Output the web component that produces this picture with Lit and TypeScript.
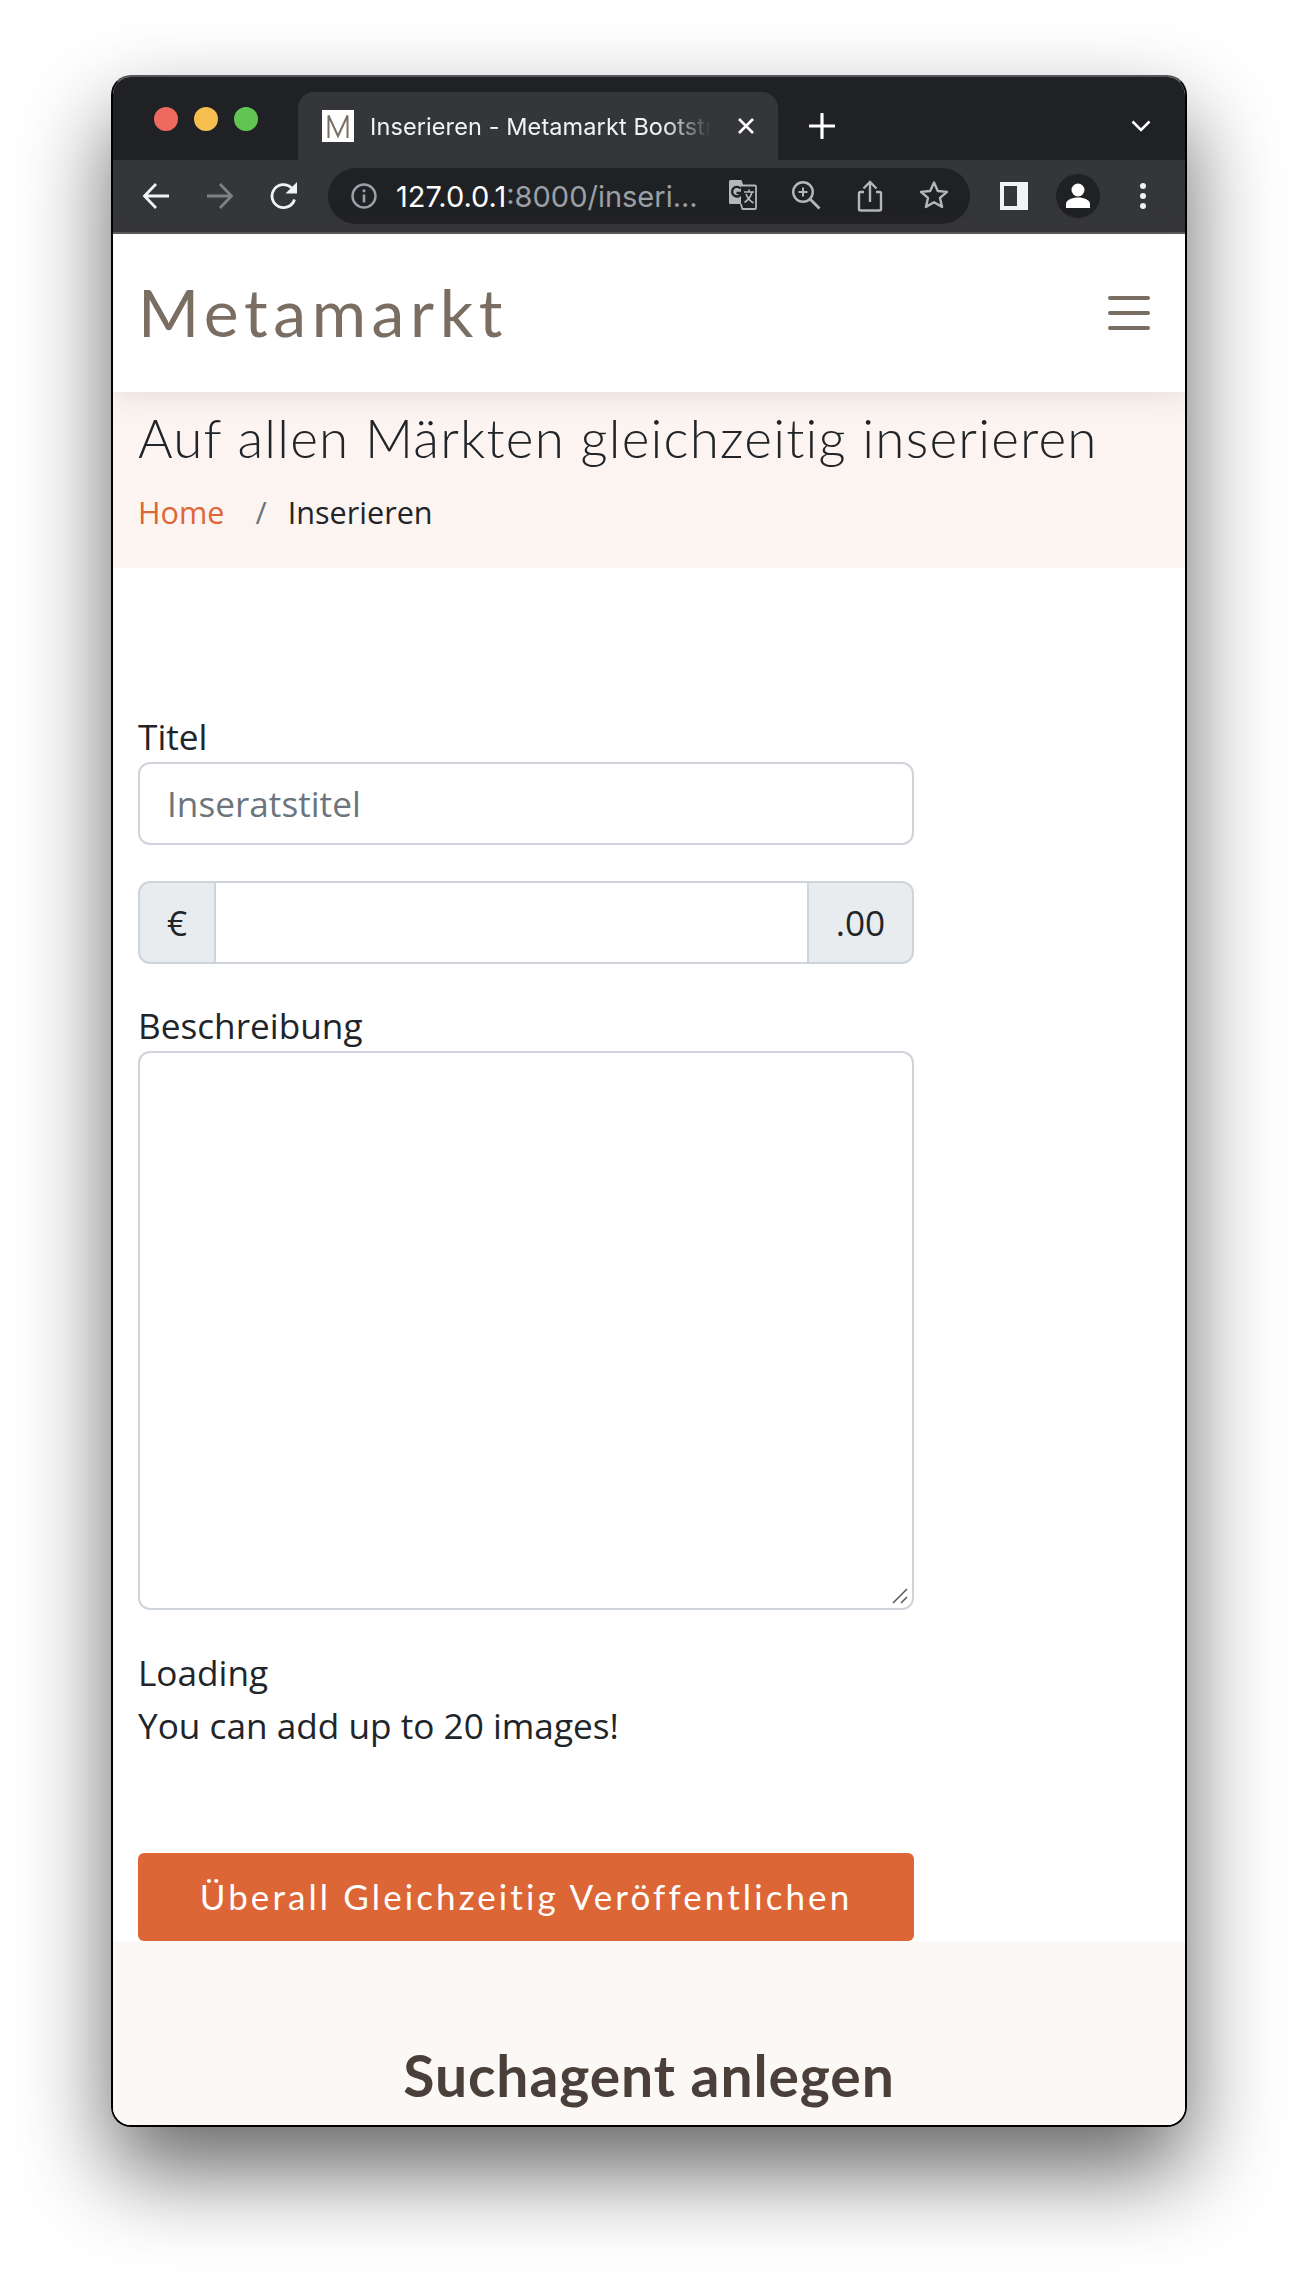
import { LitElement, css, html } from "lit";
import { customElement } from "lit/decorators.js";

// top bar of the browser window, everything in it is 2x because the shot is retina
@customElement("browser-chrome")
class BrowserChrome extends LitElement {
  static styles = css`
    :host {
      display: block;
      background: #202124;
      color: #fff;
      font-family: Inter, Roboto, sans-serif;
    }
    svg {
      display: block;
      flex: none;
    }
    .tabstrip {
      height: 83px;
      padding-top: 15px;
      box-sizing: border-box;
      display: flex;
      align-items: stretch;
    }
    .lights {
      width: 185px;
      flex: none;
      box-sizing: border-box;
      padding: 15px 0 0 41px;
      display: flex;
      gap: 16px;
    }
    .lights span {
      width: 24px;
      height: 24px;
      border-radius: 50%;
    }
    .red { background: #ee6a5f; }
    .yellow { background: #f5be4f; }
    .green { background: #61c554; }
    .tab {
      width: 480px;
      flex: none;
      background: #35363a;
      border-radius: 16px 16px 0 0;
      box-sizing: border-box;
      padding: 0 0 0 24px;
      display: flex;
      align-items: center;
      position: relative;
    }
    .favicon {
      width: 32px;
      height: 32px;
      background: #fff;
      margin-right: 16px;
    }
    .tab-title {
      width: 359px;
      overflow: hidden;
      white-space: nowrap;
      font-size: 23.5px;
      letter-spacing: 0.1px;
      color: #f1f3f4;
      -webkit-mask-image: linear-gradient(90deg, #000 82%, transparent 95%);
      mask-image: linear-gradient(90deg, #000 82%, transparent 95%);
    }
    .tab-close {
      margin-left: 8px;
    }
    .new-tab {
      margin-left: 31px;
      align-self: center;
    }
    .tab-menu {
      margin-left: auto;
      margin-right: 34px;
      align-self: center;
    }
    .toolbar {
      height: 72px;
      background: #35363a;
      border-bottom: 2px solid #5a5b5e;
      display: flex;
      align-items: center;
      padding-left: 29px;
      box-sizing: content-box;
    }
    .nav {
      display: flex;
      gap: 36px;
      margin-right: 30px;
    }
    .omnibox {
      width: 642px;
      height: 56px;
      background: #202124;
      border-radius: 28px;
      display: flex;
      align-items: center;
      box-sizing: border-box;
      padding-left: 22px;
      flex: none;
    }
    .url {
      margin-left: 18px;
      width: 331px;
      flex: none;
      font-size: 29px;
      white-space: nowrap;
      color: #fff;
    }
    .url span {
      color: #9aa0a6;
    }
    .omni-icons {
      display: flex;
      gap: 34px;
    }
    .side {
      margin-left: 30px;
    }
    .avatar {
      width: 44px;
      height: 44px;
      border-radius: 50%;
      background: #202124;
      margin-left: 28px;
      display: flex;
      align-items: center;
      justify-content: center;
    }
    .dots {
      margin-left: 39px;
    }
  `;

  render() {
    return html`
      <div class="tabstrip">
        <div class="lights">
          <span class="red"></span><span class="yellow"></span><span class="green"></span>
        </div>
        <div class="tab">
          <svg class="favicon" viewBox="0 0 32 32">
            <path d="M6.5 28V5.5L16 26 25.5 5.5V28" fill="none" stroke="#7a6d62" stroke-width="2" />
          </svg>
          <div class="tab-title">Inserieren - Metamarkt Bootstrap</div>
          <svg class="tab-close" width="18" height="18" viewBox="0 0 18 18">
            <path d="M2 2l14 14M16 2L2 16" stroke="#fff" stroke-width="2.6" />
          </svg>
        </div>
        <svg class="new-tab" width="26" height="26" viewBox="0 0 26 26">
          <path d="M13 1v24M1 13h24" stroke="#fff" stroke-width="3.2" stroke-linecap="round" />
        </svg>
        <svg class="tab-menu" width="20" height="12" viewBox="0 0 20 12">
          <path d="M1.5 1.5L10 10l8.500-8.500" fill="none" stroke="#fff" stroke-width="2.500" />
        </svg>
      </div>
      <div class="toolbar">
        <div class="nav">
          <svg width="28" height="28" viewBox="0 0 28 28">
            <path d="M27 14H3M14 2L2.500 14 14 26" fill="none" stroke="#f1f3f4" stroke-width="2.800" />
          </svg>
          <svg width="28" height="28" viewBox="0 0 28 28">
            <path d="M1 14h24M14 2l11.500 12L14 26" fill="none" stroke="#7e8083" stroke-width="2.800" />
          </svg>
          <svg width="28" height="28" viewBox="0 0 28 28">
            <path d="M24.500 17.500A11.500 11.500 0 1 1 21.500 5.800" fill="none" stroke="#f1f3f4" stroke-width="2.800" />
            <path d="M15.500 11.500H27V0z" fill="#f1f3f4" />
          </svg>
        </div>
        <div class="omnibox">
          <svg width="28" height="28" viewBox="0 0 28 28">
            <circle cx="14" cy="14" r="11.500" fill="none" stroke="#9aa0a6" stroke-width="2.400" />
            <path d="M14 12.500v8" stroke="#9aa0a6" stroke-width="2.600" />
            <circle cx="14" cy="8.800" r="1.600" fill="#9aa0a6" />
          </svg>
          <div class="url">127.0.0.1<span>:8000/inseri...</span></div>
          <div class="omni-icons">
            <svg width="30" height="30" viewBox="0 0 30 30">
              <path d="M2 1.500a1.500 1.500 0 0 1 1.500-1.500h11l8 24H3.500A1.500 1.500 0 0 1 2 22.500z" fill="#b4b6b9" />
              <path d="M14 5.500h14a1 1 0 0 1 1 1V28a1 1 0 0 1-1 1H16a1 1 0 0 1-1-1l-1-4" fill="#202124" stroke="#b4b6b9" stroke-width="1.800" />
              <path d="M17 12h10M22 9.500V12M25 12c-1 4.500-4 8-7.500 10.500M19 14c1.500 4 4 7 7.500 9" fill="none" stroke="#b4b6b9" stroke-width="1.700" />
              <path d="M13.500 8.500a4.800 4.800 0 1 0 1 4.500H9.500" fill="none" stroke="#202124" stroke-width="2.400" />
            </svg>
            <svg width="30" height="30" viewBox="0 0 30 30">
              <circle cx="12" cy="12" r="9.800" fill="none" stroke="#b4b6b9" stroke-width="2.400" />
              <path d="M19 19l9.500 9.500" stroke="#b4b6b9" stroke-width="2.800" />
              <path d="M12 7.500v9M7.500 12h9" stroke="#b4b6b9" stroke-width="2" />
            </svg>
            <svg width="30" height="32" viewBox="0 0 30 32">
              <path d="M9 12H5.500A1.500 1.500 0 0 0 4 13.500V29a1.500 1.500 0 0 0 1.500 1.500h19A1.500 1.500 0 0 0 26 29V13.500a1.500 1.500 0 0 0-1.500-1.500H21" fill="none" stroke="#b4b6b9" stroke-width="2.400" />
              <path d="M15 22V3M8.500 8.500L15 2l6.500 6.500" fill="none" stroke="#b4b6b9" stroke-width="2.400" />
            </svg>
            <svg width="30" height="30" viewBox="0 0 30 30">
              <path d="M15 2.500l3.800 8.500 9.200.9-7 6 2.100 9-8.100-4.700-8.100 4.700 2.100-9-7-6 9.200-.9z" fill="none" stroke="#b4b6b9" stroke-width="2.400" stroke-linejoin="round" />
            </svg>
          </div>
        </div>
        <svg class="side" width="28" height="28" viewBox="0 0 28 28">
          <path fill-rule="evenodd" d="M0 0h28v28H0zM4 4v20h13V4z" fill="#f1f3f4" />
        </svg>
        <div class="avatar">
          <svg width="26" height="26" viewBox="0 0 26 26">
            <circle cx="13" cy="7" r="6.500" fill="#fff" />
            <path d="M1 25v-4c0-4 6-6.500 12-6.500s12 2.500 12 6.500v4z" fill="#fff" />
          </svg>
        </div>
        <svg class="dots" width="8" height="28" viewBox="0 0 8 28">
          <circle cx="4" cy="4" r="3" fill="#f1f3f4" />
          <circle cx="4" cy="14" r="3" fill="#f1f3f4" />
          <circle cx="4" cy="24" r="3" fill="#f1f3f4" />
        </svg>
      </div>
    `;
  }
}

@customElement("app-root")
class AppRoot extends LitElement {
  static styles = css`
    :host {
      display: block;
      height: 2274px;
      box-sizing: border-box;
      padding: 75px 111px 0 111px;
      background: #fff;
      font-family: "Open Sans", sans-serif;
      color: #212529;
    }
    .window {
      height: 2052px;
      box-sizing: border-box;
      border: 2px solid #000;
      border-top-color: #55565a;
      border-radius: 20px;
      overflow: hidden;
      background: #fff;
    }
    .shadow {
      border-radius: 20px;
      box-shadow: 0 44px 90px rgba(0, 0, 0, 0.6);
    }
    .navbar {
      height: 158px;
      background: #fff;
      box-sizing: border-box;
      padding: 0 35px 3px 25px;
      display: flex;
      align-items: center;
      justify-content: space-between;
      box-shadow: 0 0 30px rgba(70, 60, 50, 0.15);
      position: relative;
    }
    .logo {
      font-family: Lato, sans-serif;
      font-weight: 400;
      font-size: 66px;
      letter-spacing: 5.6px;
      color: #7a6d62;
    }
    .toggler {
      display: flex;
      flex-direction: column;
      gap: 11.300px;
      width: 42px;
      margin-top: 3px;
    }
    .toggler span {
      height: 4px;
      border-radius: 2px;
      background: #7a6d62;
    }
    .hero {
      height: 176px;
      background: #fcf4f1;
      box-sizing: border-box;
      padding: 14px 25px 0;
    }
    h1 {
      margin: 0;
      font-family: Lato, sans-serif;
      font-weight: 300;
      font-size: 53px;
      letter-spacing: 1.2px;
      line-height: 64px;
    }
    .crumbs {
      margin-top: 18px;
      display: flex;
      font-size: 30.6px;
      line-height: 48px;
    }
    .crumbs a {
      color: #dc6636;
    }
    .crumbs i {
      font-style: normal;
      color: #6c757d;
      margin: 0 21px 0 31px;
    }
    form {
      width: 776px;
      margin-left: 25px;
      padding-top: 145px;
      display: flex;
      flex-direction: column;
    }
    label {
      display: block;
      font-size: 35.2px;
      line-height: 46px;
      height: 49px;
    }
    .control {
      height: 83px;
      border: 2px solid #ced4da;
      border-radius: 12px;
      box-sizing: border-box;
      font-size: 35.2px;
      display: flex;
      align-items: center;
      padding: 0 27px 2px;
      background: #fff;
    }
    .placeholder {
      color: #6c757d;
    }
    .group {
      margin-top: 36px;
      margin-bottom: 38px;
      height: 83px;
      display: flex;
      font-size: 35.2px;
    }
    .addon {
      background: #e9ecef;
      border: 2px solid #ced4da;
      box-sizing: border-box;
      padding-bottom: 2px;
      display: flex;
      align-items: center;
      justify-content: center;
    }
    .euro {
      width: 78px;
      border-radius: 12px 0 0 12px;
    }
    .cents {
      width: 107px;
      border-radius: 0 12px 12px 0;
      margin-left: -2px;
    }
    .middle {
      flex: 1;
      margin-left: -2px;
      border-top: 2px solid #ced4da;
      border-bottom: 2px solid #ced4da;
    }
    .textarea {
      height: 559px;
      border: 2px solid #ced4da;
      border-radius: 12px;
      box-sizing: border-box;
      position: relative;
    }
    .grip {
      position: absolute;
      right: 3px;
      bottom: 3px;
    }
    .note {
      margin-top: 36px;
      font-size: 35.2px;
      line-height: 53px;
    }
    .submit {
      margin-top: 101px;
      height: 88px;
      padding-bottom: 3px;
      box-sizing: border-box;
      background: #dc6636;
      border-radius: 6px;
      color: #fff;
      display: flex;
      align-items: center;
      justify-content: center;
      font-family: Lato, sans-serif;
      font-size: 35px;
      letter-spacing: 3.1px;
    }
    .agent {
      background: #fcf8f5;
      height: 300px;
      padding-top: 102px;
      box-sizing: border-box;
      text-align: center;
    }
    h2 {
      margin: 0;
      font-family: Lato, sans-serif;
      font-weight: 700;
      font-size: 57px;
      letter-spacing: 0.9px;
      line-height: 64px;
      color: #4a3f39;
    }
  `;

  render() {
    return html`
      <div class="shadow">
        <div class="window">
          <browser-chrome></browser-chrome>
          <div class="navbar">
            <div class="logo">Metamarkt</div>
            <div class="toggler"><span></span><span></span><span></span></div>
          </div>
          <div class="hero">
            <h1>Auf allen Märkten gleichzeitig inserieren</h1>
            <div class="crumbs"><a>Home</a><i>/</i><span>Inserieren</span></div>
          </div>
          <form>
            <label>Titel</label>
            <div class="control"><span class="placeholder">Inseratstitel</span></div>
            <div class="group">
              <div class="addon euro">€</div>
              <div class="middle"></div>
              <div class="addon cents">.00</div>
            </div>
            <label>Beschreibung</label>
            <div class="textarea">
              <svg class="grip" width="18" height="18" viewBox="0 0 18 18">
                <path d="M2 16L16 2M10 16l6-6" stroke="#555" stroke-width="1.500" />
              </svg>
            </div>
            <div class="note">Loading<br />You can add up to 20 images!</div>
            <div class="submit">Überall Gleichzeitig Veröffentlichen</div>
          </form>
          <div class="agent"><h2>Suchagent anlegen</h2></div>
        </div>
      </div>
    `;
  }
}
